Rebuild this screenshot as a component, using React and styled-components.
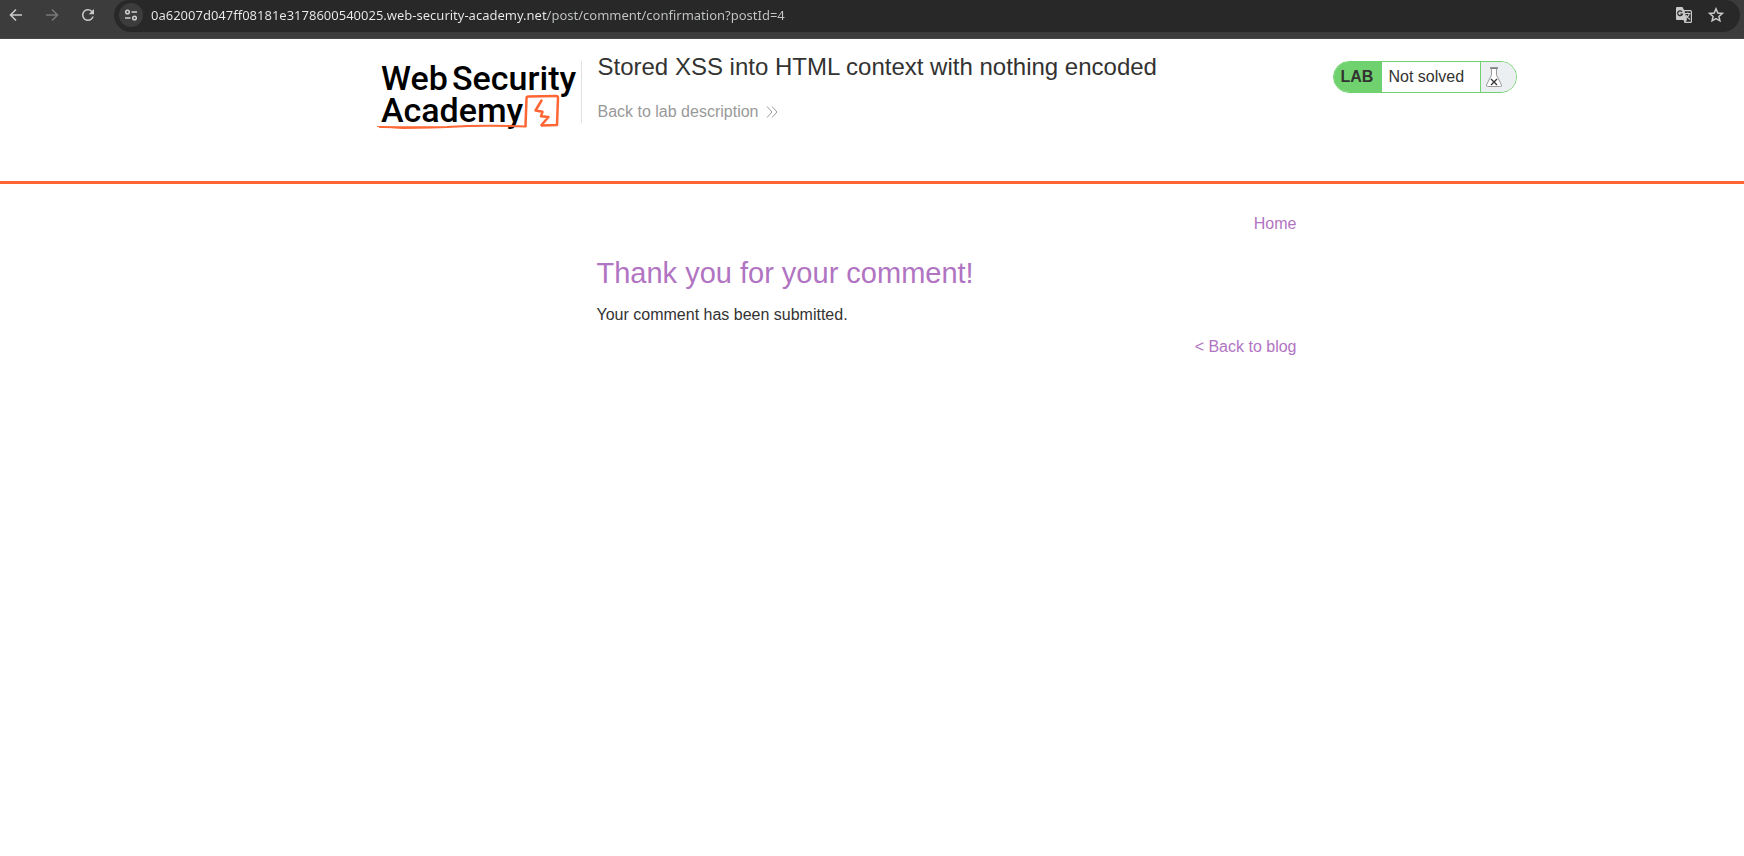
import React from "react";
import styled, { createGlobalStyle } from "styled-components";
import { MdRefresh } from "react-icons/md";

const GlobalStyle = createGlobalStyle`
  *, *::before, *::after { box-sizing: border-box; }
  body {
    margin: 0;
    background: #ffffff;
    color: #333332;
    font-family: "Liberation Sans", Arial, sans-serif;
    font-size: 16px;
    line-height: 20px;
  }
  h1, h2, p { margin: 0; font-weight: 400; }
  a { text-decoration: none; }
`;

const BrowserBar = styled.div`
  display: flex;
  align-items: flex-start;
  height: 39px;
  padding-right: 4px;
  background: #3c3c3c;
  border-bottom: 1px solid #474747;
`;

const NavButtons = styled.div`
  display: flex;
  gap: 4px;
  width: 114px;
`;

const IconButton = styled.button`
  display: flex;
  align-items: center;
  justify-content: center;
  width: 32px;
  height: 30px;
  padding: 0;
  border: 0;
  background: transparent;
  color: ${(p) => (p.$dim ? "#777777" : "#c9c9c9")};
`;

const AddressBar = styled.div`
  display: flex;
  flex: 1;
  align-items: center;
  height: 32px;
  padding: 0 8px 2px 5px;
  background: #282828;
  border-radius: 15px 15px 17px 17px;
`;

const SiteInfo = styled.button`
  display: flex;
  align-items: center;
  justify-content: center;
  width: 24px;
  height: 24px;
  padding: 0;
  border: 0;
  border-radius: 50%;
  background: #3c3c3c;
  color: #d0d0d0;
`;

const UrlInput = styled.input`
  flex: 1;
  min-width: 0;
  height: 20px;
  margin-left: 8px;
  padding: 0;
  border: 0;
  outline: 0;
  color: #e8e8e8;
  background: linear-gradient(to right, #ececec 396px, #c4c7c7 396px);
  background-clip: text;
  -webkit-background-clip: text;
  -webkit-text-fill-color: transparent;
  font: 13px/20px "Noto Sans", "Open Sans", sans-serif;
`;

const Site = styled.div`
  padding-left: 149px;
`;

const LabHeader = styled.header`
  padding-left: 149px;
  border-bottom: 3px solid #ff6633;
`;

const HeaderInner = styled.div`
  display: flex;
  align-items: flex-start;
  max-width: 1140px;
  height: 142px;
  margin: 0 auto;
  padding-top: 14px;
`;

const LogoLink = styled.a`
  display: block;
  width: 205px;
  height: 80px;
  background: linear-gradient(#e0e0e0, #e0e0e0) right 8px / 1px 62px no-repeat;
`;

const TitleBlock = styled.div`
  flex: 1;
  padding-left: 16px;
`;

const LabTitle = styled.h2`
  font-size: 24px;
  line-height: 28px;
`;

const LabLink = styled.a`
  display: inline-flex;
  align-items: center;
  gap: 8px;
  margin-top: 21px;
  color: #999999;
`;

const Status = styled.div`
  display: flex;
  width: 184px;
  height: 32px;
  margin-top: 8px;
  overflow: hidden;
  border: 1px solid #70d26f;
  border-radius: 16px;
`;

const StatusTag = styled.span`
  width: 48px;
  padding-left: 7px;
  background: #70d26f;
  font-weight: 700;
  line-height: 30px;
`;

const StatusText = styled.p`
  flex: 1;
  padding-left: 7px;
  line-height: 30px;
`;

const StatusIcon = styled.span`
  width: 36px;
  padding: 5px 0 0 4px;
  border-left: 1px solid #70d26f;
  background: #ebeff1;
`;

const Content = styled.main`
  display: flex;
  flex-direction: column;
  max-width: 700px;
  margin: 0 auto;
  padding-top: 30px;
`;

const NavRow = styled.nav`
  display: flex;
  justify-content: flex-end;
`;

const PurpleLink = styled.a`
  color: #b174c2;
`;

const Heading = styled.h1`
  margin: 21px 0 14px;
  color: #b174c2;
  font-size: 29px;
  line-height: 36px;
`;

const Message = styled.p`
  margin-bottom: 12px;
`;

const Svg = ({ size = 16, children, ...rest }) => (
  <svg width={size} height={size} viewBox="0 0 16 16" fill="none" stroke="currentColor" strokeWidth="1.6" aria-hidden="true" {...rest}>
    {children}
  </svg>
);

const Logo = () => (
  <svg width="204" height="80" viewBox="0 0 204 80" role="img" aria-label="Web Security Academy">
    <g fill="#000" fontFamily="Roboto, sans-serif" fontWeight="500" fontSize="34">
      <text x="4" y="37">Web</text>
      <text x="75" y="37">Security</text>
      <text x="4" y="69">Academy</text>
    </g>
    <g fill="none" stroke="#ff6633" strokeLinejoin="round" strokeLinecap="round">
      <path strokeWidth="2.5" d="M148.500 73L149.500 45.500Q149.500 43.500 151.500 43.500L179 43Q181 43 181 45L180 72L165 72.500" />
      <path strokeWidth="2" d="M148.500 73.500Q105 72 70 74Q35 74.500 3 74" />
      <path strokeWidth="1" d="M0.500 73.500L26 75.500L70 74.500" />
      <path strokeWidth="2.5" d="M164.500 47.500L158.500 57.500L165.500 58.800L164 63.300L171.500 64L164.500 72" />
    </g>
  </svg>
);

const Flask = () => (
  <svg width="18" height="21" viewBox="0 0 18 21" fill="none" aria-hidden="true">
    <path d="M6.500 1.500V8L1.500 18Q1 19.500 2.500 19.500H15.500Q17 19.500 16.500 18L11.500 8V1.500Z" fill="#fff" stroke="#999" />
    <path d="M5 1H13" stroke="#777" strokeWidth="1.500" />
    <path d="M6 12L12 18M12 12L6 18" stroke="#333" strokeWidth="1.300" />
  </svg>
);

export default function App() {
  return (
    <>
      <GlobalStyle />
      <BrowserBar>
        <NavButtons>
          <IconButton aria-label="Back">
            <Svg><path d="M14 8H3M8 2.500L2.500 8L8 13.500" /></Svg>
          </IconButton>
          <IconButton $dim aria-label="Forward">
            <Svg><path d="M2 8H13M8 2.500L13.500 8L8 13.500" /></Svg>
          </IconButton>
          <IconButton aria-label="Reload">
            <MdRefresh size={18} />
          </IconButton>
        </NavButtons>
        <AddressBar>
          <SiteInfo aria-label="View site information">
            <Svg strokeWidth="1.500">
              <circle cx="4.500" cy="5" r="1.800" />
              <path d="M8.500 5H14M2 11H7.500" />
              <circle cx="11.500" cy="11" r="1.800" />
            </Svg>
          </SiteInfo>
          <UrlInput
            aria-label="Address"
            readOnly
            value="0a62007d047ff08181e3178600540025.web-security-academy.net/post/comment/confirmation?postId=4"
          />
          <IconButton aria-label="Translate this page">
            <Svg size={18} viewBox="0 0 18 18" stroke="none">
              <path fill="currentColor" d="M2 1H7.500L9 4H15.500Q17 4 17 5.500V15.500Q17 17 15.500 17H9.500L8.500 14H2Q1 14 1 13V2Q1 1 2 1Z" />
              <path fill="#282828" d="M9.500 5.200H15.800V15.800H10.500L12 14Z" />
              <path stroke="#282828" strokeWidth="1.200" d="M7 5.800A2.400 2.400 0 1 0 7.400 8H5.200" />
              <path stroke="currentColor" strokeWidth="1.100" d="M10 7.500H15.500M12.800 6.500V7.500M14.500 7.500Q13.500 10.500 11 12M11 9Q12.500 12 15 13.500" />
            </Svg>
          </IconButton>
          <IconButton aria-label="Bookmark this tab">
            <Svg strokeWidth="1.500">
              <path d="M8 1.800L9.800 6L14.300 6.400L10.900 9.400L11.900 13.800L8 11.500L4.100 13.800L5.100 9.400L1.700 6.400L6.200 6Z" />
            </Svg>
          </IconButton>
        </AddressBar>
      </BrowserBar>
      <LabHeader>
        <HeaderInner>
          <LogoLink href="#"><Logo /></LogoLink>
          <TitleBlock>
            <LabTitle>Stored XSS into HTML context with nothing encoded</LabTitle>
            <LabLink href="#">
              Back to lab description
              <Svg size={12} viewBox="0 0 12 12" strokeWidth="1">
                <path d="M1 0.500L6 6L1 11.500M6 0.500L11 6L6 11.500" />
              </Svg>
            </LabLink>
          </TitleBlock>
          <Status>
            <StatusTag>LAB</StatusTag>
            <StatusText>Not solved</StatusText>
            <StatusIcon><Flask /></StatusIcon>
          </Status>
        </HeaderInner>
      </LabHeader>
      <Site>
        <Content>
          <NavRow><PurpleLink href="#">Home</PurpleLink></NavRow>
          <Heading>Thank you for your comment!</Heading>
          <Message>Your comment has been submitted.</Message>
          <NavRow><PurpleLink href="#">&lt; Back to blog</PurpleLink></NavRow>
        </Content>
      </Site>
    </>
  );
}
